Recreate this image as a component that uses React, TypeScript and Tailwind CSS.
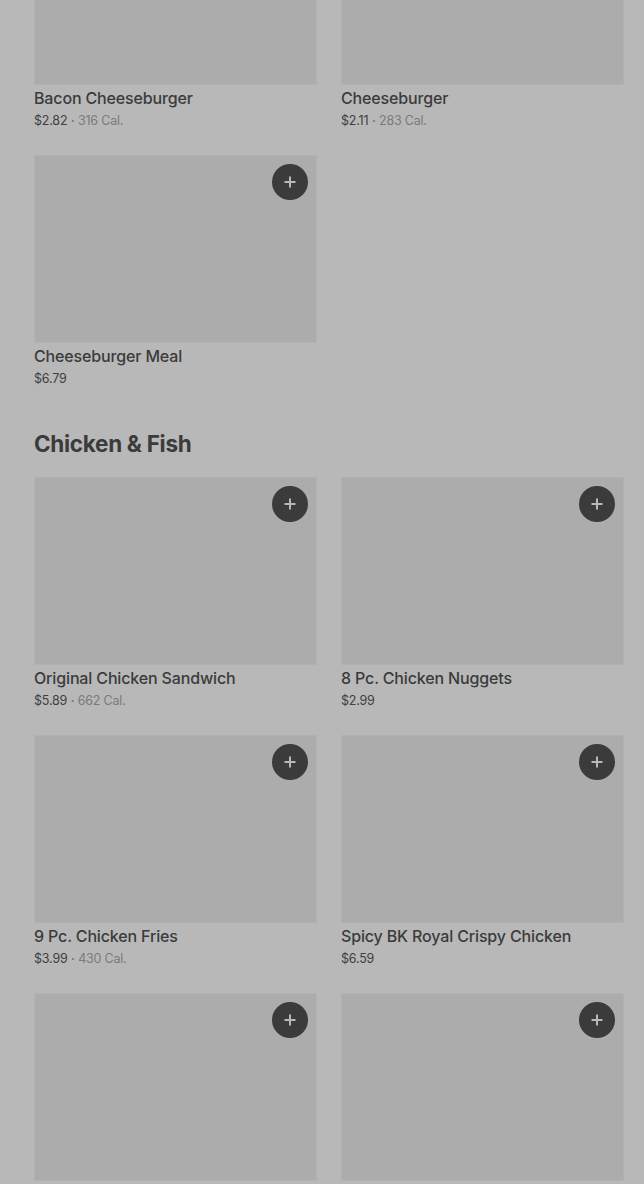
import React from "react";

type Item = { name: string; price: string; cal?: string };

function PlusButton() {
  return (
    <div className="absolute right-[8px] top-[8px] flex h-9 w-9 items-center justify-center rounded-full bg-[#3b3b3b]">
      <svg width="14" height="14" viewBox="0 0 14 14">
        <path d="M7 1.5v11M1.5 7h11" stroke="#b8b8b8" strokeWidth="2" />
      </svg>
    </div>
  );
}

function Card({ item, plus = true, text = true }: { item: Item; plus?: boolean; text?: boolean }) {
  return (
    <div className="flex flex-col">
      <div className="relative h-[188px] border border-[#b1b1b1] bg-[#acacac]">
        {plus && <PlusButton />}
      </div>
      {text && (
        <>
          <div className="mt-[1px] text-[16px] font-medium leading-6 tracking-[-0.15px] text-[#3b3b3b]">
            {item.name}
          </div>
          <div className="text-[12.5px] leading-[22px] tracking-[-0.2px] text-[#3f3f3f]">
            {item.price}
            {item.cal && (
              <span className="text-[#7a7a7a]">
                {" "}
                <span className="font-bold">·</span> {item.cal}
              </span>
            )}
          </div>
        </>
      )}
    </div>
  );
}

export default function App() {
  const burgers: Item[] = [
    { name: "Bacon Cheeseburger", price: "$2.82", cal: "316 Cal." },
    { name: "Cheeseburger", price: "$2.11", cal: "283 Cal." },
    { name: "Cheeseburger Meal", price: "$6.79" },
  ];
  const chicken: Item[] = [
    { name: "Original Chicken Sandwich", price: "$5.89", cal: "662 Cal." },
    { name: "8 Pc. Chicken Nuggets", price: "$2.99" },
    { name: "9 Pc. Chicken Fries", price: "$3.99", cal: "430 Cal." },
    { name: "Spicy BK Royal Crispy Chicken", price: "$6.59" },
    { name: "Whopper", price: "$5.49" },
    { name: "Fish Sandwich", price: "$4.99" },
  ];
  return (
    <div
      className="h-[1184px] w-[644px] overflow-hidden bg-[#b8b8b8]"
      style={{ fontFamily: "Inter, 'Noto Sans', sans-serif" }}
    >
      <div className="-mt-[103px] pl-[34px] pr-[20px]">
        <div className="grid grid-cols-2 gap-x-6 gap-y-[23px]">
          {burgers.map((b, i) => (
            <Card key={b.name} item={b} plus={i === 2} />
          ))}
        </div>
        <h2 className="mt-[38px] text-[22.5px] font-bold leading-8 tracking-[-0.3px] text-[#3b3b3b]">
          Chicken &amp; Fish
        </h2>
        <div className="mt-[17px] grid grid-cols-2 gap-x-6 gap-y-[23px]">
          {chicken.map((b, i) => (
            <Card key={b.name} item={b} text={i < 4} />
          ))}
        </div>
      </div>
    </div>
  );
}
